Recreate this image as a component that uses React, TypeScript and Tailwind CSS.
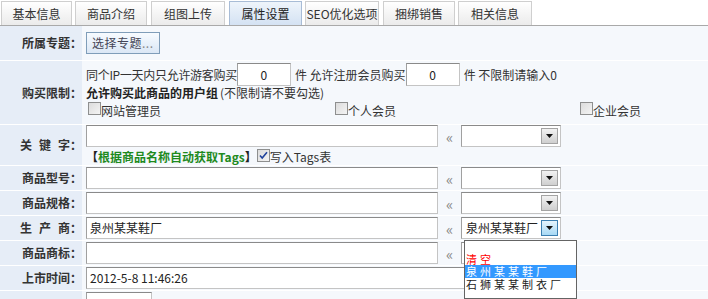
import React from "react";

const tabs = [
  { name: "基本信息", cls: "ml-[1px] w-[71px]" },
  { name: "商品介绍", cls: "ml-[3px] w-[72px]" },
  { name: "组图上传", cls: "ml-[4px] w-[74px]" },
  { name: "属性设置", cls: "ml-[4px] w-[73px]", active: true },
  { name: "SEO优化选项", cls: "ml-[3px] w-[74px]" },
  { name: "捆绑销售", cls: "ml-[4px] w-[72px]" },
  { name: "相关信息", cls: "ml-[3px] w-[74px]" },
];

const inputBorder =
  "bg-white border border-[#c4c4c4] border-t-[#8a8a8a] border-l-[#a0a0a0]";

function TextBox({ className = "", value = "" }: { className?: string; value?: string }) {
  return (
    <div className={`${inputBorder} h-[22px] shrink-0 flex items-center px-[3px] text-[12px] text-[#222] whitespace-nowrap ${className}`}>
      {value}
    </div>
  );
}

function Arrow() {
  return (
    <svg width="7" height="4" viewBox="0 0 7 4">
      <path d="M0 0h7L3.5 4z" fill="#111" />
    </svg>
  );
}

function Select({ value = "", hot = false }: { value?: string; hot?: boolean }) {
  return (
    <div className={`${inputBorder} h-[22px] w-[100px] shrink-0 flex items-center justify-between pl-[4px] pr-[2px]`}>
      <span className="text-[12px] text-[#222] whitespace-nowrap">{value}</span>
      <span
        className={
          hot
            ? "w-[17px] h-[16px] shrink-0 flex items-center justify-center border border-[#3c7fb1] bg-gradient-to-b from-[#e5f4fc] to-[#a7d9f5]"
            : "w-[17px] h-[16px] shrink-0 flex items-center justify-center border border-[#a3a3a3] bg-gradient-to-b from-[#f2f2f2] to-[#cfcfcf]"
        }
      >
        <Arrow />
      </span>
    </div>
  );
}

function Pick({ value = "", hot = false }: { value?: string; hot?: boolean }) {
  return (
    <div className="flex items-center">
      <TextBox className="w-[352px]" value={value} />
      <span className="w-[23px] text-center text-[15px] text-[#888]">«</span>
      <Select value={value} hot={hot} />
    </div>
  );
}

function Check({ on = false }: { on?: boolean }) {
  return (
    <span className="w-[13px] h-[13px] shrink-0 border border-[#8e8f8f] bg-gradient-to-br from-[#dcdcdc] to-[#f4f4f4] flex items-center justify-center">
      {on && (
        <svg width="9" height="9" viewBox="0 0 9 9">
          <path d="M1 4.5l2.2 2.5L8 1.2" stroke="#21439c" strokeWidth="1.6" fill="none" />
        </svg>
      )}
    </span>
  );
}

function Row({ label, h, children }: { label: React.ReactNode; h: string; children?: React.ReactNode }) {
  return (
    <div className={`flex border-b border-white ${h}`}>
      <div className="w-[82px] shrink-0 bg-[#e6edf7] flex items-center justify-end font-bold text-[12px] text-[#333]">
        {label}
      </div>
      <div className="flex-1 bg-[#f5f8fc] pl-[4px] flex flex-col justify-center">{children}</div>
    </div>
  );
}

export default function App() {
  return (
    <div className="relative w-[708px] h-[299px] overflow-hidden bg-white font-['Noto_Sans_CJK_SC',sans-serif] text-[12px] text-[#333] leading-none">
      {/* tab strip */}
      <div className="flex items-end h-[26px] border-b border-[#a9a9a9]">
        {tabs.map((t) => (
          <div
            key={t.name}
            className={`${t.cls} h-[24px] flex items-center justify-center border border-b-0 whitespace-nowrap ${
              t.active
                ? "border-[#a8bcd6] bg-gradient-to-b from-[#eef4fb] to-[#d4e2f3] text-[#222]"
                : "border-[#cfcfcf] bg-gradient-to-b from-white to-[#ebebeb] text-[#333]"
            }`}
          >
            {t.name}
          </div>
        ))}
      </div>

      <Row label="所属专题：" h="h-[35px]">
        <div className="flex">
          <div className="h-[22px] px-[5px] flex items-center border border-[#7f9db9] bg-gradient-to-b from-[#f7fbff] to-[#dbe7f5] text-[#445] tracking-[0.5px]">
            选择专题<span className="text-[#888]">...</span>
          </div>
        </div>
      </Row>

      <Row label="购买限制：" h="h-[64px]">
        <div className="flex items-center h-[19px] whitespace-nowrap">
          <span className="tracking-[-0.3px]">同个IP一天内只允许游客购买</span>
          <TextBox className="w-[54px] justify-center h-[23px]" value="0" />
          <span className="ml-[4px]">件&nbsp;允许注册会员购买</span>
          <TextBox className="w-[54px] justify-center h-[23px]" value="0" />
          <span className="ml-[4px]">件&nbsp;不限制请输入0</span>
        </div>
        <div className="flex items-center h-[18px] whitespace-nowrap">
          <span className="font-bold text-[#222]">允许购买此商品的用户组</span>
          <span className="ml-[2px]">(不限制请不要勾选)</span>
        </div>
        <div className="grid grid-cols-[247px_245px_1fr] h-[18px] items-center">
          {["网站管理员", "个人会员", "企业会员"].map((g) => (
            <div key={g} className="flex items-center">
              <span className="-mt-[6px] ml-[2px]">
                <Check />
              </span>
              <span>{g}</span>
            </div>
          ))}
        </div>
      </Row>

      <Row
        label={
          <span>
            <span className="tracking-[7px]">关键</span>字：
          </span>
        }
        h="h-[41px]"
      >
        <Pick />
        <div className="flex items-center h-[16px] mt-[2px] whitespace-nowrap">
          <span className="font-bold text-[#222]">【</span>
          <span className="font-bold text-[#1e8a1e]">根据商品名称自动获取Tags</span>
          <span className="font-bold text-[#222]">】</span>
          <span className="-mt-[3px]">
            <Check on />
          </span>
          <span>写入Tags表</span>
        </div>
      </Row>

      <Row label="商品型号：" h="h-[25px]">
        <Pick />
      </Row>
      <Row label="商品规格：" h="h-[25px]">
        <Pick />
      </Row>
      <Row
        label={
          <span>
            <span className="tracking-[7px]">生产</span>商：
          </span>
        }
        h="h-[25px]"
      >
        <Pick value="泉州某某鞋厂" hot />
      </Row>
      <Row label="商品商标：" h="h-[25px]">
        <Pick />
      </Row>
      <Row label="上市时间：" h="h-[25px]">
        <div className="flex">
          <TextBox className="w-[480px]" value="2012-5-8 11:46:26" />
        </div>
      </Row>
      <Row label="" h="h-[25px]">
        <div className="flex">
          <TextBox className="w-[66px]" />
        </div>
      </Row>

      {/* open dropdown list of the 生产商 select */}
      <div className="absolute left-[464px] top-[240px] w-[113px] h-[59px] bg-white border border-[#646464] text-[11px] tracking-[3px] leading-[11px] whitespace-nowrap overflow-hidden">
        <div className="h-[12px]" />
        <div className="h-[12px] pl-[1px] text-[#ff0000] flex items-center">清空</div>
        <div className="h-[13px] pl-[1px] bg-[#3399ff] text-white flex items-center">泉州某某鞋厂</div>
        <div className="h-[13px] pl-[1px] text-[#222] flex items-center">石狮某某制衣厂</div>
      </div>
    </div>
  );
}
